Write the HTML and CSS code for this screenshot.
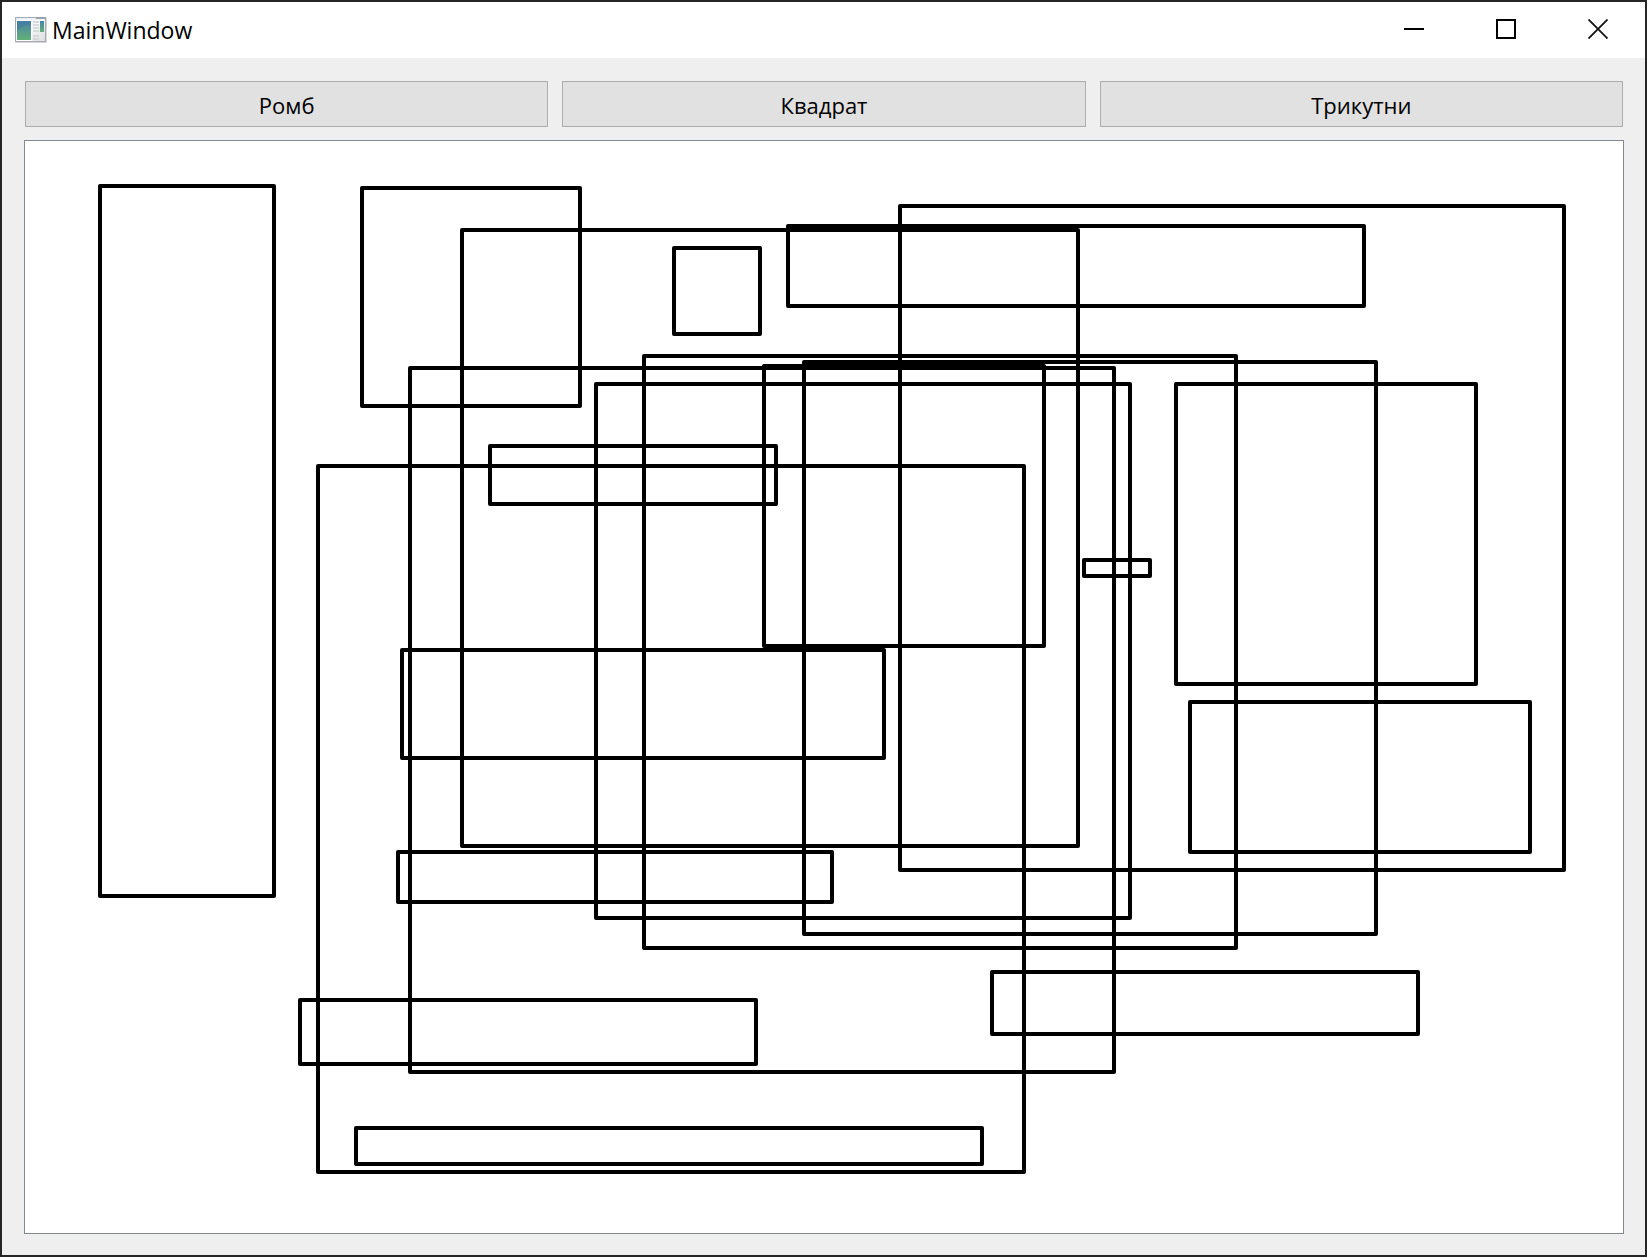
FILE: index.html
```html
<!DOCTYPE html>
<html lang="uk">
<head>
<meta charset="utf-8">
<title>MainWindow</title>
<link rel="stylesheet" href="styles.css">
</head>
<body>
<div class="window">
  <header class="titlebar">
    <svg class="app-icon" width="32" height="26" viewBox="0 0 32 26" aria-hidden="true">
      <defs>
        <linearGradient id="frame" x1="0" y1="0" x2="1" y2="1">
          <stop offset="0" stop-color="#e4eef4"/>
          <stop offset="0.5" stop-color="#f6f7f8"/>
          <stop offset="1" stop-color="#dcdddf"/>
        </linearGradient>
        <linearGradient id="pane" x1="0" y1="0" x2="0" y2="1">
          <stop offset="0" stop-color="#4a83a6"/>
          <stop offset="1" stop-color="#62b077"/>
        </linearGradient>
      </defs>
      <rect x="0" y="1" width="32" height="25" rx="1" fill="#d4d6d9"/>
      <rect x="0.5" y="0.5" width="30" height="24" fill="url(#frame)" stroke="#a3acb5"/>
      <rect x="21" y="0" width="10" height="2" fill="#98a3ae"/>
      <rect x="1" y="3" width="16" height="21" fill="#fff"/>
      <rect x="2" y="4" width="14" height="19" fill="url(#pane)"/>
      <path d="M2 14C5 10 10 8 16 8V4H2z" fill="#3f789f" opacity="0.5"/>
      <path d="M18 5h6M18 8h6M18 11h6M18 14h6M18 19h6M18 22h6" stroke="#cfd1d4" stroke-width="1.5"/>
      <rect x="25" y="4" width="4" height="11" fill="url(#pane)"/>
    </svg>
    <h1 class="title">MainWindow</h1>
    <div class="controls">
      <button class="control" type="button" aria-label="Minimize">
        <svg width="20" height="20" viewBox="0 0 20 20"><path d="M0 10h20" stroke="#000" stroke-width="2"/></svg>
      </button>
      <button class="control" type="button" aria-label="Maximize">
        <svg width="20" height="20" viewBox="0 0 20 20"><rect x="1" y="1" width="18" height="18" fill="none" stroke="#000" stroke-width="2"/></svg>
      </button>
      <button class="control" type="button" aria-label="Close">
        <svg width="20" height="20" viewBox="0 0 20 20"><path d="M0.5 0.5l19 19M19.5 0.5l-19 19" stroke="#111" stroke-width="1.8"/></svg>
      </button>
    </div>
  </header>
  <main class="content">
    <div class="toolbar">
      <button class="tool" type="button">Ромб</button>
      <button class="tool" type="button">Квадрат</button>
      <button class="tool" type="button">Трикутни</button>
    </div>
    <div class="view">
      <svg class="scene" role="img" aria-label="Сцена">
        <rect x="75" y="45" width="174" height="710"/>
        <rect x="337" y="47" width="218" height="218"/>
        <rect x="437" y="89" width="616" height="616"/>
        <rect x="649" y="107" width="86" height="86"/>
        <rect x="763" y="85" width="576" height="80"/>
        <rect x="875" y="65" width="664" height="664"/>
        <rect x="385" y="227" width="704" height="704"/>
        <rect x="619" y="215" width="592" height="592"/>
        <rect x="571" y="243" width="534" height="534"/>
        <rect x="739" y="225" width="280" height="280"/>
        <rect x="779" y="221" width="572" height="572"/>
        <rect x="1151" y="243" width="300" height="300"/>
        <rect x="465" y="305" width="286" height="58"/>
        <rect x="293" y="325" width="706" height="706"/>
        <rect x="1059" y="419" width="66" height="16"/>
        <rect x="377" y="509" width="482" height="108"/>
        <rect x="373" y="711" width="434" height="50"/>
        <rect x="1165" y="561" width="340" height="150"/>
        <rect x="275" y="859" width="456" height="64"/>
        <rect x="331" y="987" width="626" height="36"/>
        <rect x="967" y="831" width="426" height="62"/>
      </svg>
    </div>
  </main>
</div>
</body>
</html>
```

FILE: styles.css
```css
* {
  box-sizing: border-box;
}

body {
  margin: 0;
  font-family: "Open Sans", "Noto Sans", sans-serif;
  font-size: 22px;
  color: #000;
}

.window {
  display: flex;
  flex-direction: column;
  min-height: 100vh;
  border: 2px solid #262627;
  background: #efefef;
}

.titlebar {
  display: flex;
  align-items: center;
  gap: 5px;
  height: 56px;
  padding: 0 1px 0 13px;
  background: #fff;
}

.app-icon {
  flex: none;
}

.title {
  flex: 1;
  margin: 0;
  font-size: 23px;
  font-weight: 400;
  line-height: 32px;
}

.controls {
  display: flex;
  align-self: stretch;
}

.control {
  display: flex;
  align-items: center;
  justify-content: center;
  width: 92px;
  padding: 0 0 2px;
  border: 0;
  background: transparent;
}

.control:hover {
  background: #e5e5e5;
}

.content {
  display: flex;
  flex: 1;
  flex-direction: column;
  gap: 13px;
  padding: 23px 21px 21px 22px;
}

.toolbar {
  display: grid;
  grid-template-columns: repeat(3, 1fr);
  gap: 14px;
  padding: 0 1px;
}

.tool {
  height: 46px;
  padding: 2px 0 0;
  border: 1px solid #adadad;
  background: #e1e1e1;
  color: inherit;
  font: inherit;
  line-height: 32px;
}

.tool:hover {
  border-color: #0078d7;
  background: #e5f1fb;
}

.view {
  display: flex;
  flex: 1;
  border: 1px solid #828790;
  background: #fff;
}

.scene {
  flex: 1;
  min-height: 1060px;
  fill: none;
  stroke: #000;
  stroke-width: 4px;
  stroke-linejoin: round;
}
```
